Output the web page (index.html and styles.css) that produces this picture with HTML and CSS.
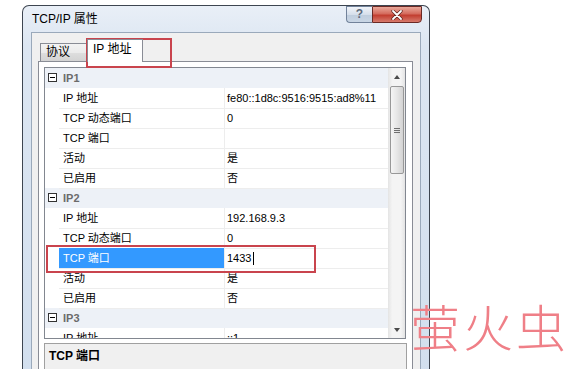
FILE: index.html
```html
<!DOCTYPE html>
<html lang="zh-CN">
<head>
  <meta charset="UTF-8">
  <title>TCP/IP 属性</title>
  <link rel="stylesheet" href="styles.css">
</head>
<body>

  <div class="window">
    <div class="titlebar">
      <span class="title">TCP/IP 属性</span>
      <div class="caption">
        <div class="btn-help">?</div>
        <div class="btn-close">
          <svg width="12" height="10" viewBox="0 0 12 10">
            <path d="M2 1 L10 9 M10 1 L2 9" stroke="#5a1f1a" stroke-width="3.2" stroke-linecap="round"/>
            <path d="M2 1 L10 9 M10 1 L2 9" stroke="#fff" stroke-width="1.8" stroke-linecap="round"/>
          </svg>
        </div>
      </div>
    </div>

    <div class="client">
      <div class="tabs">
        <div class="tab">协议</div>
        <div class="tab active">IP 地址</div>
      </div>

      <div class="tab-panel">
        <div class="propgrid">
          <div class="rows">
            <div class="row cat"><span class="toggle"></span><span class="label">IP1</span></div>
            <div class="row"><span></span><span class="name">IP 地址</span><span class="value">fe80::1d8c:9516:9515:ad8%11</span></div>
            <div class="row"><span></span><span class="name">TCP 动态端口</span><span class="value">0</span></div>
            <div class="row"><span></span><span class="name">TCP 端口</span><span class="value"></span></div>
            <div class="row"><span></span><span class="name">活动</span><span class="value">是</span></div>
            <div class="row"><span></span><span class="name">已启用</span><span class="value">否</span></div>

            <div class="row cat"><span class="toggle"></span><span class="label">IP2</span></div>
            <div class="row"><span></span><span class="name">IP 地址</span><span class="value">192.168.9.3</span></div>
            <div class="row"><span></span><span class="name">TCP 动态端口</span><span class="value">0</span></div>
            <div class="row sel"><span></span><span class="name">TCP 端口</span><span class="value">1433<i class="caret"></i></span></div>
            <div class="row"><span></span><span class="name">活动</span><span class="value">是</span></div>
            <div class="row"><span></span><span class="name">已启用</span><span class="value">否</span></div>

            <div class="row cat"><span class="toggle"></span><span class="label">IP3</span></div>
            <div class="row"><span></span><span class="name">IP 地址</span><span class="value">::1</span></div>
          </div>

          <div class="scrollbar">
            <div class="sb-btn"><span class="arrow-up"></span></div>
            <div class="sb-thumb"><span class="grip"></span></div>
            <div class="sb-track"></div>
            <div class="sb-btn"><span class="arrow-down"></span></div>
          </div>
        </div>

        <div class="desc">
          <div class="desc-title">TCP 端口</div>
          <div class="desc-text">TCP 端口</div>
        </div>
      </div>
    </div>
  </div>

  <!-- red annotation boxes -->
  <div class="mark mark-tab"></div>
  <div class="mark mark-row"></div>

  <div class="watermark">萤火虫</div>

</body>
</html>
```

FILE: styles.css
```css
* {
  box-sizing: border-box;
}

html, body {
  margin: 0;
}

body {
  position: relative;
  width: 580px;
  height: 369px;
  overflow: hidden;
  background: #fff;
  font-family: "Liberation Sans", "Noto Sans CJK SC", sans-serif;
  font-size: 11px;
  color: #000;
}

/* window frame */
.window {
  margin: 5px 0 0 22px;
  width: 408px;
  height: 380px;
  border: 1px solid #3d4550;
  border-bottom: none;
  border-radius: 7px 7px 0 0;
  background: linear-gradient(to bottom, #e9eff7, #dce6f2 40px, #d2dfee);
  display: flex;
  flex-direction: column;
}

.titlebar {
  height: 26px;
  display: flex;
  justify-content: space-between;
  align-items: flex-start;
  padding-left: 9px;
}

.title {
  font-size: 12px;
  line-height: 26px;
}

.caption {
  display: flex;
  margin: 0 7px 0 0;
}

.btn-help {
  width: 26px;
  height: 17px;
  border: 1px solid #71829a;
  border-right: none;
  border-radius: 0 0 0 4px;
  background: linear-gradient(to bottom, #f1f4f9, #d6dfeb 50%, #bfcddd 51%, #c9d6e5);
  color: #5e6b7c;
  font-size: 12px;
  font-weight: bold;
  text-align: center;
  line-height: 15px;
}

.btn-close {
  width: 50px;
  height: 17px;
  border: 1px solid #6b2a25;
  border-radius: 0 0 4px 0;
  background: linear-gradient(to bottom, #eaa99b, #d46b5d 45%, #c23e30 55%, #d77a6c);
  display: flex;
  align-items: center;
  justify-content: center;
}

/* dialog client area */
.client {
  flex: 1;
  margin: 0 8px;
  background: #f0f0f0;
  border: 1px solid #9aa9bb;
  border-bottom: none;
  display: flex;
  flex-direction: column;
}

.tabs {
  display: flex;
  align-items: flex-end;
  height: 22px;
  margin: 6px 0 0 8px;
}

.tab {
  width: 47px;
  height: 18px;
  border: 1px solid #898c95;
  border-bottom: none;
  border-right: none;
  background: linear-gradient(to bottom, #f3f3f3, #ebebeb 50%, #dedede 51%, #d3d3d3);
  padding-left: 5px;
  font-size: 12px;
  line-height: 16px;
}

.tab.active {
  position: relative;
  z-index: 1;
  width: 56px;
  height: 23px;
  margin-bottom: -1px;
  border-right: 1px solid #898c95;
  background: #fff;
  line-height: 18px;
}

.tab-panel {
  flex: 1;
  margin: 0 7px 0 6px;
  background: #fff;
  border: 1px solid #898c95;
  border-bottom: none;
  padding: 5px 0 0 5px;
}

/* property grid */
.propgrid {
  display: flex;
  width: 362px;
  height: 272px;
  border: 1px solid #828790;
  overflow: hidden;
}

.rows {
  width: 343px;
}

.row {
  display: grid;
  grid-template-columns: 14px 166px 1fr;
  height: 20px;
}

.row .name {
  padding-left: 4px;
  line-height: 20px;
  border-right: 1px solid #ededed;
  border-bottom: 1px solid #ededed;
  white-space: nowrap;
}

.row .value {
  padding-left: 2px;
  line-height: 20px;
  border-bottom: 1px solid #ededed;
  white-space: nowrap;
}

.row.cat {
  background: #edf1f7;
}

.cat .label {
  grid-column: 2 / 4;
  padding-left: 4px;
  line-height: 21px;
  font-weight: bold;
  color: #6b6b6b;
}

.toggle {
  position: relative;
  width: 9px;
  height: 9px;
  margin: 5px 0 0 3px;
  border: 1px solid #333;
  background: #fff;
}

.toggle::after {
  content: "";
  position: absolute;
  left: 1px;
  top: 3px;
  width: 5px;
  height: 1px;
  background: #000;
}

.row.sel .name {
  background: #3399ff;
  color: #fff;
}

.caret {
  display: inline-block;
  width: 1px;
  height: 13px;
  margin-left: 2px;
  vertical-align: -3px;
  background: #000;
}

/* scrollbar */
.scrollbar {
  width: 17px;
  display: flex;
  flex-direction: column;
  background: linear-gradient(to right, #e4e4e4, #f4f4f4 25%, #f4f4f4 75%, #e4e4e4);
}

.sb-btn {
  height: 17px;
  display: flex;
  align-items: center;
  justify-content: center;
}

.arrow-up {
  width: 0;
  height: 0;
  border-left: 3.5px solid transparent;
  border-right: 3.5px solid transparent;
  border-bottom: 4px solid #4a4a4a;
}

.arrow-down {
  width: 0;
  height: 0;
  border-left: 3.5px solid transparent;
  border-right: 3.5px solid transparent;
  border-top: 4px solid #4a4a4a;
}

.sb-thumb {
  height: 88px;
  margin: 1px 1px 0 2px;
  border: 1px solid #989898;
  border-radius: 2px;
  background: linear-gradient(to right, #f5f5f5, #e6e6e6 50%, #d3d3d3);
  display: flex;
  align-items: center;
  justify-content: center;
}

.grip {
  width: 6px;
  height: 5px;
  border-top: 1px solid #6f6f6f;
  border-bottom: 1px solid #6f6f6f;
  position: relative;
}

.grip::after {
  content: "";
  position: absolute;
  left: 0;
  top: 1px;
  width: 6px;
  height: 1px;
  background: #6f6f6f;
}

.sb-track {
  flex: 1;
}

/* description pane */
.desc {
  width: 363px;
  height: 60px;
  margin-top: 4px;
  border: 1px solid #a0a0a0;
  background: #f0f0f0;
  padding: 5px 4px;
}

.desc-title {
  font-weight: bold;
  font-size: 12px;
  line-height: 14px;
}

.desc-text {
  margin-top: 5px;
  line-height: 14px;
}

/* annotations */
.mark {
  position: absolute;
  border: 2px solid #c9444d;
}

.mark-tab {
  left: 86px;
  top: 38px;
  width: 86px;
  height: 30px;
}

.mark-row {
  left: 46px;
  top: 245px;
  width: 270px;
  height: 28px;
}

.watermark {
  position: absolute;
  left: 410px;
  top: 300px;
  font-family: "Noto Sans CJK SC", sans-serif;
  font-weight: 300;
  font-size: 50px;
  line-height: 1;
  letter-spacing: 3px;
  color: #ef7f87;
}
```
